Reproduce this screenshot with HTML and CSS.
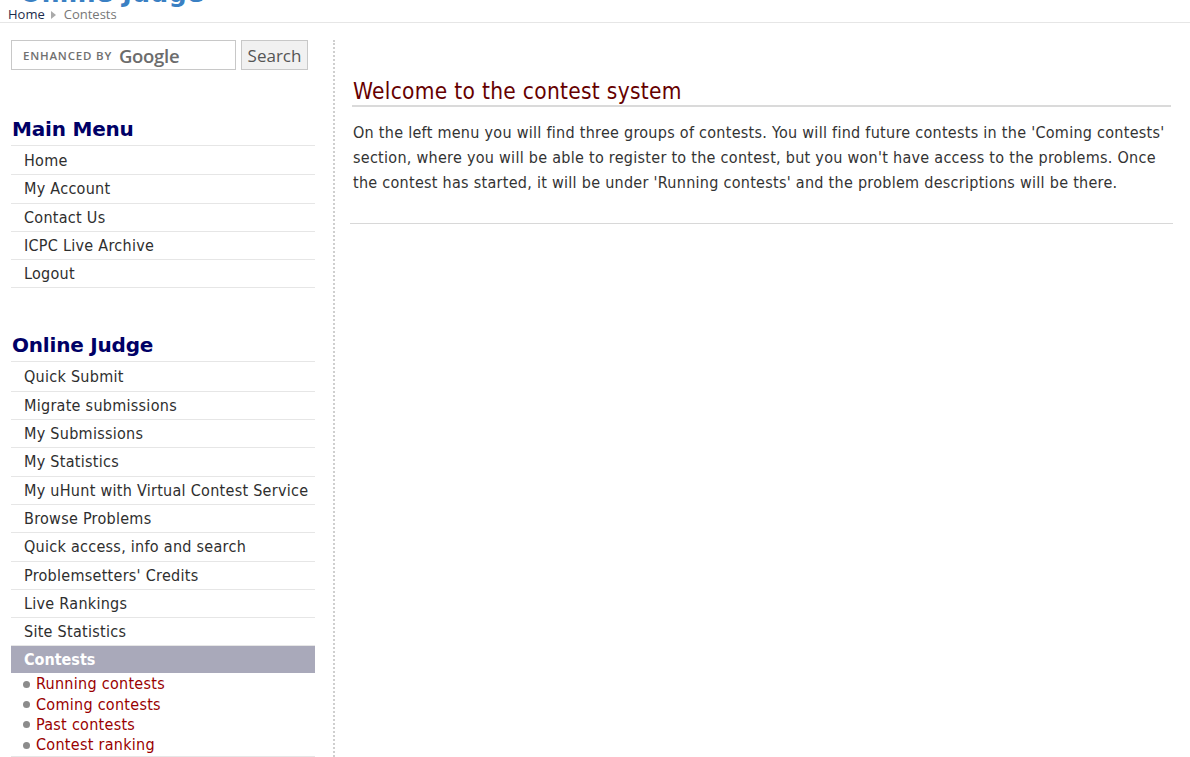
FILE: index.html
```html
<!DOCTYPE html>
<html>
<head>
<meta charset="utf-8">
<link rel="stylesheet" href="styles.css">
</head>
<body>
<div class="topbar">
  <div class="logo"><span>Online Judge</span></div>
  <div class="crumbs"><a class="crumb-home">Home</a><span class="crumb-arrow"></span><span class="crumb-cur">Contests</span></div>
</div>
<div class="page">
  <aside class="sidebar">
    <form class="search">
      <div class="search-box"><span class="enh">ENHANCED BY</span><span class="goog">Google</span></div>
      <div class="search-btn">Search</div>
    </form>
    <section class="menu">
      <h3 class="menu-title">Main Menu</h3>
      <ul class="menu-list">
        <li>Home</li>
        <li>My Account</li>
        <li>Contact Us</li>
        <li>ICPC Live Archive</li>
        <li>Logout</li>
      </ul>
    </section>
    <section class="menu menu-second">
      <h3 class="menu-title">Online Judge</h3>
      <ul class="menu-list">
        <li>Quick Submit</li>
        <li>Migrate submissions</li>
        <li>My Submissions</li>
        <li>My Statistics</li>
        <li>My uHunt with Virtual Contest Service</li>
        <li>Browse Problems</li>
        <li>Quick access, info and search</li>
        <li>Problemsetters' Credits</li>
        <li>Live Rankings</li>
        <li>Site Statistics</li>
        <li class="active"><div class="active-label">Contests</div>
          <ul class="sub-list">
            <li>Running contests</li>
            <li>Coming contests</li>
            <li>Past contests</li>
            <li>Contest ranking</li>
          </ul>
        </li>
      </ul>
    </section>
  </aside>
  <div class="divider"></div>
  <main class="main">
    <h2 class="main-title">Welcome to the contest system</h2>
    <p class="main-text">On the left menu you will find three groups of contests. You will find future contests in the 'Coming contests' section, where you will be able to register to the contest, but you won't have access to the problems. Once the contest has started, it will be under 'Running contests' and the problem descriptions will be there.</p>
    <hr class="main-rule">
  </main>
</div>
</body>
</html>
```
FILE: styles.css
```css
* { box-sizing: border-box; }
html, body { margin: 0; padding: 0; background: #fff; }
body { font-family: "DejaVu Sans Condensed", "DejaVu Sans", sans-serif; color: #333; height: 757px; overflow: hidden; }

.topbar { height: 23px; border-bottom: 1px solid #e6e6e6; position: relative; }
.logo { position: absolute; left: 20px; top: 0; height: 7px; overflow: hidden; }
.logo span { display: block; font-family: "DejaVu Sans", sans-serif; font-weight: bold; font-size: 25px; line-height: 28px; margin-top: -20px; color: #3a80c3; letter-spacing: 0.4px; white-space: nowrap; }
.crumbs { position: absolute; left: 8px; top: 7px; font-family: "Open Sans", sans-serif; font-size: 13px; line-height: 15px; display: flex; align-items: center; }
.crumb-home { color: #1c2c4c; }
.crumb-arrow { width: 0; height: 0; border-left: 5px solid #aaa; border-top: 4px solid transparent; border-bottom: 4px solid transparent; margin: 0 8px 0 6px; }
.crumb-cur { color: #777; }

.page { display: flex; padding: 17px 0 0 11px; }
.sidebar { width: 304px; flex: none; }
.search { display: flex; margin: 0; }
.search-box { width: 225px; height: 30px; border: 1px solid #c8c8c8; display: flex; align-items: center; padding-left: 11px; color: #707070; }
.enh { font-family: "Open Sans", sans-serif; font-weight: 600; font-size: 11.5px; letter-spacing: 0.8px; margin-right: 7px; }
.goog { font-family: "Open Sans", sans-serif; font-weight: 600; font-size: 18.5px; letter-spacing: -0.3px; color: #6c6c6c; }
.search-btn { margin-left: 5px; width: 67px; height: 30px; border: 1px solid #c8c8c8; background: #f1f1f1; color: #555; font-family: "Open Sans", sans-serif; font-size: 17px; display: flex; align-items: center; justify-content: center; }

.menu { margin-top: 46px; }
.menu-second { margin-top: 44px; }
.menu-title { margin: 0; font-family: "DejaVu Sans", sans-serif; font-weight: bold; font-size: 20px; line-height: 26px; color: #000066; padding: 0 0 3px 1px; border-bottom: 1px solid #e6e6e6; letter-spacing: -0.2px; }
.menu-list { list-style: none; margin: 0; padding: 0; }
.menu-list > li { font-size: 16px; letter-spacing: 0.28px; line-height: 27.3px; padding-left: 13px; border-bottom: 1px solid #e6e6e6; color: #2e2e2e; }
.menu-list > li:first-child { padding-top: 1px; }
.menu-list > li.active { padding-left: 0; }
.active-label { background: #a9a9ba; color: #fff; font-weight: bold; line-height: 27px; padding-left: 13px; letter-spacing: 0; }
.sub-list { list-style: none; margin: 1px 0 0 0; padding: 0 0 1px 12px; }
.sub-list li { color: #990000; line-height: 20.2px; display: flex; align-items: center; }
.sub-list li::before { content: ""; width: 7px; height: 7px; border-radius: 50%; background: #8c8c8c; margin-right: 6px; flex: none; }

.divider { flex: none; margin-left: 18px; width: 2px; height: 720px; border-left: 2px dotted #cfcfcf; }
.main { width: 823px; margin-left: 15px; flex: none; }
.main-title { margin: 38px 2px 0 2px; font-weight: normal; font-size: 22.5px; letter-spacing: 0.3px; line-height: 27px; color: #660000; padding-left: 1px; border-bottom: 2px solid #dadada; }
.main-text { margin: 13px 0 0 0; padding-left: 3px; font-size: 16px; letter-spacing: 0.28px; line-height: 25px; color: #333; }
.main-rule { margin: 28px 0 0 0; border: 0; border-top: 1px solid #d8d8d8; height: 0; }
```
